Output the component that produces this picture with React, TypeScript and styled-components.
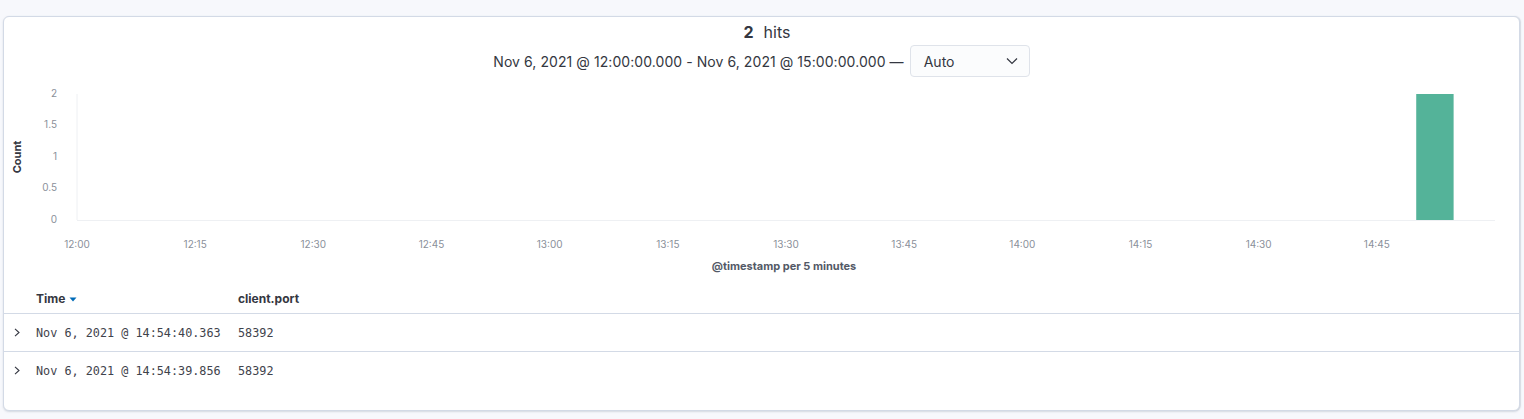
import React from "react";
import styled, { createGlobalStyle } from "styled-components";

const GlobalStyle = createGlobalStyle`
  html, body {
    margin: 0;
    padding: 0;
    background: #f7f8fc;
    font-family: Inter, "Noto Sans", "Liberation Sans", sans-serif;
    color: #343741;
  }
`;

const Page = styled.div`
  padding: 16px 4px 9px 3px;
`;

const Panel = styled.div`
  background: #ffffff;
  border: 1px solid #d3dae6;
  border-radius: 6px;
  box-shadow: 0 1px 2px rgba(152, 162, 179, 0.35), 1px 0 1px rgba(152, 162, 179, 0.25);
  padding-bottom: 20px;
`;

const Header = styled.div`
  display: flex;
  flex-direction: column;
  align-items: center;
  padding-top: 3px;
`;

const Hits = styled.div`
  font-size: 16px;
  line-height: 24px;
  margin: 0 0 1px 11px;
  strong {
    font-weight: 700;
    margin-right: 10px;
  }
`;

const RangeRow = styled.div`
  display: flex;
  align-items: center;
  gap: 6px;
  font-size: 14px;
  height: 32px;
  letter-spacing: 0.07px;
`;

const Select = styled.div`
  box-sizing: border-box;
  width: 120px;
  height: 32px;
  display: flex;
  align-items: center;
  justify-content: space-between;
  padding: 0 11px 0 13px;
  background: #fbfcfd;
  border: 1px solid #dfe3ea;
  border-radius: 4px;
  font-size: 14px;
  letter-spacing: 0;
  color: #343741;
`;

const Chart = styled.svg`
  display: block;
  margin-top: 3px;
`;

const TableRow = styled.div<{ $header?: boolean; $last?: boolean }>`
  display: grid;
  grid-template-columns: 32px 202px 1fr;
  align-items: center;
  height: ${(p) => (p.$header ? 30 : 37)}px;
  padding-top: ${(p) => (p.$header ? 3 : 0)}px;
  border-bottom: ${(p) => (p.$last ? "1px solid transparent" : "1px solid #d3dae6")};
  font-size: 12px;
`;

const HeadCell = styled.div`
  font-weight: 700;
  display: flex;
  align-items: center;
  gap: 4px;
`;

const Cell = styled.div`
  font-family: "DejaVu Sans Mono", "Liberation Mono", monospace;
  font-size: 11.8px;
  color: #3f434c;
`;

const Toggle = styled.div`
  display: flex;
  justify-content: flex-start;
  padding-left: 10px;
`;

const Chevron = () => (
  <svg width="6" height="9" viewBox="0 0 6 9">
    <path d="M1 0.8 L5 4.5 L1 8.2" fill="none" stroke="#343741" strokeWidth="1.1" />
  </svg>
);

const SortArrow = () => (
  <svg width="8" height="5" viewBox="0 0 8 5" style={{ marginTop: 3 }}>
    <path d="M0.5 0.5 H7.5 L4 4.5 Z" fill="#006bb8" />
  </svg>
);

const DownChevron = () => (
  <svg width="12" height="8" viewBox="0 0 12 8">
    <path d="M1 1.5 L6 6.5 L11 1.5" fill="none" stroke="#343741" strokeWidth="1.2" />
  </svg>
);

const xLabels = ["12:00", "12:15", "12:30", "12:45", "13:00", "13:15", "13:30", "13:45", "14:00", "14:15", "14:30", "14:45"];
const yTicks = [
  { v: "2", y: 14 },
  { v: "1.5", y: 45.5 },
  { v: "1", y: 77 },
  { v: "0.5", y: 108.5 },
  { v: "0", y: 140 },
];

const rows = [
  { time: "Nov 6, 2021 @ 14:54:40.363", port: "58392" },
  { time: "Nov 6, 2021 @ 14:54:39.856", port: "58392" },
];

export default function App() {
  const x0 = 73;
  const x1 = 1491;
  const step = (x1 - x0) / 12;
  return (
    <>
      <GlobalStyle />
      <Page>
        <Panel>
          <Header>
            <Hits>
              <strong>2</strong>hits
            </Hits>
            <RangeRow>
              <span>Nov 6, 2021 @ 12:00:00.000 - Nov 6, 2021 @ 15:00:00.000 —</span>
              <Select>
                <span>Auto</span>
                <DownChevron />
              </Select>
            </RangeRow>
          </Header>
          <Chart width="1514" height="200" viewBox="0 0 1514 200">
            <text
              x="14"
              y="77"
              transform="rotate(-90 14 77)"
              textAnchor="middle"
              dominantBaseline="middle"
              fontSize="11"
              fontWeight="700"
              fill="#343741"
              fontFamily="Inter, sans-serif"
            >
              Count
            </text>
            {yTicks.map((t) => (
              <text
                key={t.v}
                x="53"
                y={t.y}
                textAnchor="end"
                dominantBaseline="middle"
                fontSize="10"
                fill="#8a909a"
                fontFamily="Inter, sans-serif"
              >
                {t.v}
              </text>
            ))}
            <line x1={x0} y1="14" x2={x0} y2="140" stroke="#eef0f3" strokeWidth="1" />
            <line x1={x0} y1="140.5" x2={x1} y2="140.5" stroke="#eef0f3" strokeWidth="1" />
            <rect x={x0 + step * 11 + step / 3} y="14" width={step / 3 - 2} height="126" fill="#54b399" />
            {xLabels.map((l, i) => (
              <text
                key={l}
                x={x0 + i * step}
                y="165"
                textAnchor="middle"
                dominantBaseline="middle"
                fontSize="10"
                fill="#8a909a"
                fontFamily="Inter, sans-serif"
              >
                {l}
              </text>
            ))}
            <text
              x="780"
              y="187"
              textAnchor="middle"
              dominantBaseline="middle"
              fontSize="11"
              fontWeight="700"
              fill="#535966"
              fontFamily="Inter, sans-serif"
            >
              @timestamp per 5 minutes
            </text>
          </Chart>
          <TableRow $header>
            <div />
            <HeadCell>
              Time <SortArrow />
            </HeadCell>
            <HeadCell>client.port</HeadCell>
          </TableRow>
          {rows.map((r, i) => (
            <TableRow key={r.time} $last={i === rows.length - 1}>
              <Toggle>
                <Chevron />
              </Toggle>
              <Cell>{r.time}</Cell>
              <Cell>{r.port}</Cell>
            </TableRow>
          ))}
        </Panel>
      </Page>
    </>
  );
}
